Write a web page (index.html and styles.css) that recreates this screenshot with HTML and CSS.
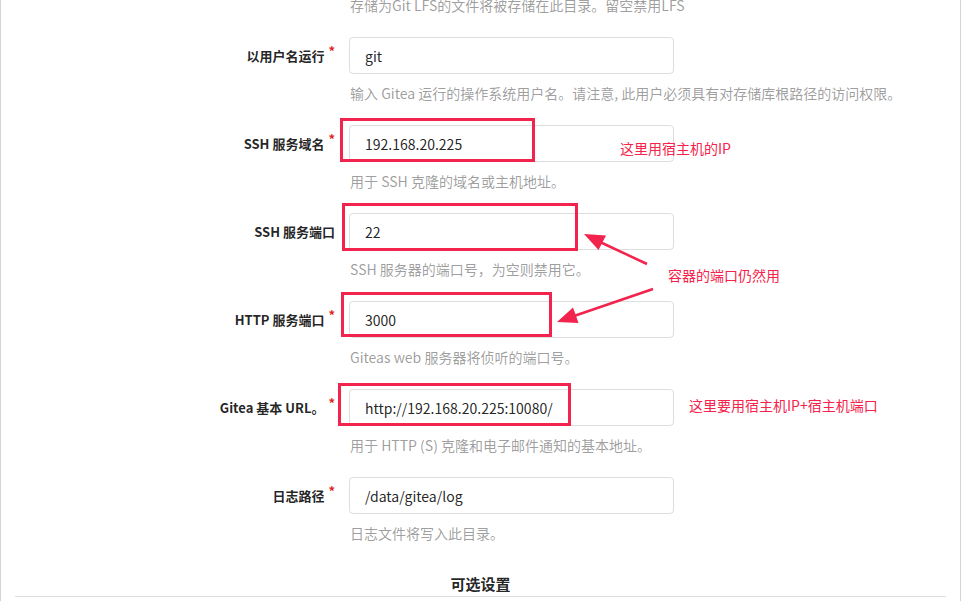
FILE: index.html
```html
<!DOCTYPE html>
<html lang="zh-CN">
<head>
<meta charset="utf-8">
<link rel="stylesheet" href="styles.css">
</head>
<body>
<div class="segment">
  <form class="form">
    <div class="field tail">
      <div class="label-col"></div>
      <div class="input-col"><p class="help">存储为Git LFS的文件将被存储在此目录。留空禁用LFS</p></div>
    </div>
    <div class="field">
      <label class="label-col">以用户名运行<span class="req">*</span></label>
      <div class="input-col"><div class="input">git</div><p class="help">输入 Gitea 运行的操作系统用户名。请注意, 此用户必须具有对存储库根路径的访问权限。</p></div>
    </div>
    <div class="field">
      <label class="label-col">SSH 服务域名<span class="req">*</span></label>
      <div class="input-col"><div class="input">192.168.20.225</div><p class="help">用于 SSH 克隆的域名或主机地址。</p></div>
    </div>
    <div class="field">
      <label class="label-col">SSH 服务端口</label>
      <div class="input-col"><div class="input">22</div><p class="help">SSH 服务器的端口号，为空则禁用它。</p></div>
    </div>
    <div class="field">
      <label class="label-col">HTTP 服务端口<span class="req">*</span></label>
      <div class="input-col"><div class="input">3000</div><p class="help">Giteas web 服务器将侦听的端口号。</p></div>
    </div>
    <div class="field">
      <label class="label-col">Gitea 基本 URL。<span class="req">*</span></label>
      <div class="input-col"><div class="input">http://192.168.20.225:10080/</div><p class="help">用于 HTTP (S) 克隆和电子邮件通知的基本地址。</p></div>
    </div>
    <div class="field">
      <label class="label-col">日志路径<span class="req">*</span></label>
      <div class="input-col"><div class="input">/data/gitea/log</div><p class="help">日志文件将写入此目录。</p></div>
    </div>
    <h4 class="dividing-header">可选设置</h4>
  </form>
</div>

<div class="overlay">
  <div class="mark mark-1"></div>
  <div class="mark mark-2"></div>
  <div class="mark mark-3"></div>
  <div class="mark mark-4"></div>
  <svg class="arrows" width="961" height="601" viewBox="0 0 961 601">
    <line x1="647" y1="264" x2="600" y2="242" stroke="#f2234d" stroke-width="2.5"/>
    <polygon points="584,234 606,235.5 598.5,250" fill="#f2234d"/>
    <line x1="653" y1="289" x2="574" y2="316" stroke="#f2234d" stroke-width="2.5"/>
    <polygon points="557,322 573,307.5 578.5,323" fill="#f2234d"/>
  </svg>
  <span class="note note-1">这里用宿主机的IP</span>
  <span class="note note-2">容器的端口仍然用</span>
  <span class="note note-3">这里要用宿主机IP+宿主机端口</span>
</div>
</body>
</html>
```
FILE: styles.css
```css
html, body {
  margin: 0;
  padding: 0;
  background: #ffffff;
  height: 601px;
  overflow: hidden;
}
body {
  position: relative;
  font-family: "Noto Sans CJK SC", "Noto Sans", sans-serif;
  color: rgba(0, 0, 0, 0.87);
}
.segment {
  box-sizing: border-box;
  width: 961px;
  height: 601px;
  border-left: 1px solid #d4d4d5;
  border-right: 1px solid #d4d4d5;
  overflow: hidden;
}
.form {
  margin-top: -5px;
  padding: 0 14px;
}
.field {
  display: flex;
  align-items: flex-start;
  margin-bottom: 22px;
}
.field.tail {
  margin-bottom: 22px;
}
.label-col {
  box-sizing: border-box;
  width: 320px;
  flex: none;
  height: 37px;
  display: flex;
  align-items: center;
  justify-content: flex-end;
  font-size: 13px;
  font-weight: 700;
  color: rgba(0, 0, 0, 0.87);
  white-space: nowrap;
}
.field.tail .label-col { height: 20px; }
.req {
  color: #db2828;
  font-size: 13px;
  line-height: 1;
  margin-left: 4px;
  align-self: flex-start;
  margin-top: 7px;
}
.input-col {
  margin-left: 14px;
  width: 325px;
  flex: none;
}
.input {
  box-sizing: border-box;
  width: 325px;
  height: 37px;
  border: 1px solid rgba(34, 36, 38, 0.15);
  border-radius: 4px;
  padding: 0 15px;
  display: flex;
  align-items: center;
  font-size: 14px;
  color: rgba(0, 0, 0, 0.87);
  white-space: nowrap;
}
.help {
  margin: 9px 0 0 1px;
  font-size: 14px;
  line-height: 20px;
  color: rgba(0, 0, 0, 0.4);
  white-space: nowrap;
}
.field.tail .help { margin-top: 0; }
.dividing-header {
  margin: 31px 0 0 0;
  padding-bottom: 2px;
  border-bottom: 1px solid rgba(34, 36, 38, 0.15);
  text-align: center;
  font-size: 15px;
  line-height: 20px;
  font-weight: 700;
  color: rgba(0, 0, 0, 0.87);
}

/* screenshot annotations drawn over the form */
.overlay {
  position: absolute;
  left: 0;
  top: 0;
  width: 961px;
  height: 601px;
  pointer-events: none;
}
.arrows {
  position: absolute;
  left: 0;
  top: 0;
}
.mark {
  position: absolute;
  box-sizing: border-box;
  border: 3px solid #f2234d;
}
.mark-1 { left: 340px; top: 118px; width: 195px; height: 44px; }
.mark-2 { left: 342px; top: 203px; width: 236px; height: 48px; }
.mark-3 { left: 341px; top: 292px; width: 211px; height: 45px; }
.mark-4 { left: 338px; top: 383px; width: 233px; height: 43px; }
.note {
  position: absolute;
  font-size: 14px;
  line-height: 20px;
  color: #f5224b;
  white-space: nowrap;
}
.note-1 { left: 620px; top: 138px; }
.note-2 { left: 668px; top: 265px; }
.note-3 { left: 689px; top: 395px; }
```
